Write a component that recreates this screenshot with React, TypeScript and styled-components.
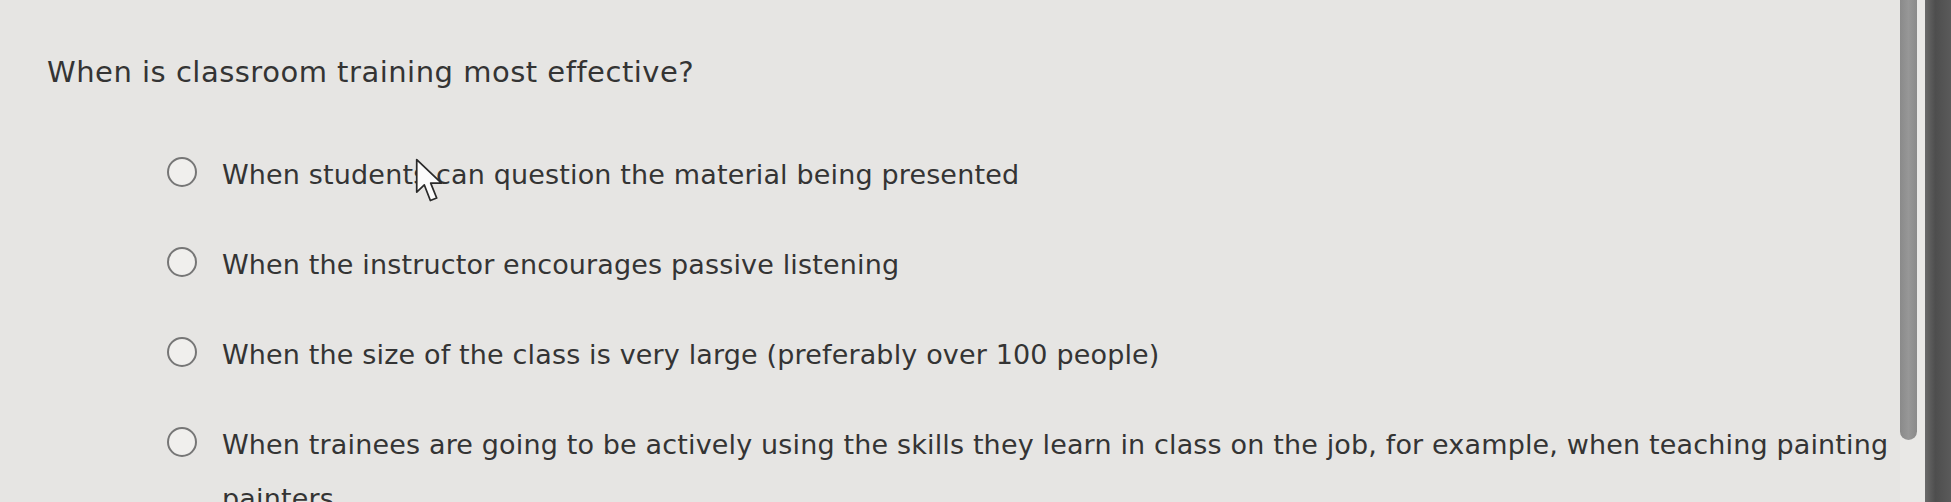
import React, { useState } from 'react';
import styled, { createGlobalStyle } from 'styled-components';

const options = [
  'When students can question the material being presented',
  'When the instructor encourages passive listening',
  'When the size of the class is very large (preferably over 100 people)',
  'When trainees are going to be actively using the skills they learn in class on the job, for example, when teaching painting painters',
];

const GlobalStyle = createGlobalStyle`
  html, body {
    margin: 0;
    padding: 0;
    background: #e5e4e2;
    overflow: hidden;
  }
`;

const Quiz = () => {
  const [selected, setSelected] = useState<number | null>(null);

  return (
    <>
      <GlobalStyle />
      <Screen>
        <Content>
          <Question>When is classroom training most effective?</Question>
          <OptionList>
            {options.map((text, i) => (
              <Option key={i} onClick={() => setSelected(i)}>
                <Radio checked={selected === i} />
                <Label>{text}</Label>
              </Option>
            ))}
          </OptionList>
          <Cursor viewBox="0 0 20 29" aria-hidden>
            <path
              d="M1 1 L1 21.5 L5.8 17 L9.6 26.8 L13.6 25.2 L9.8 15.8 L16.6 15.8 Z"
              fill="#fbfbfb"
              stroke="#2a2a2a"
              strokeWidth="1.1"
              strokeLinejoin="round"
            />
          </Cursor>
        </Content>
        <Gutter>
          <Thumb />
        </Gutter>
        <Bezel />
      </Screen>
    </>
  );
};

const Screen = styled.div`
  display: flex;
  width: 1951px;
  height: 502px;
  overflow: hidden;
  font-family: 'DejaVu Sans', Verdana, sans-serif;
  color: #343434;
`;

const Content = styled.main`
  position: relative;
  flex: 1;
  min-width: 0;
  padding: 54px 0 0 47px;
  background: #e6e5e3;
`;

const Question = styled.h1`
  margin: 0;
  font-size: 29px;
  font-weight: normal;
  line-height: 36px;
  letter-spacing: 0.5px;
`;

const OptionList = styled.ul`
  list-style: none;
  margin: 58px 0 0;
  padding: 0 0 0 120px;
  display: flex;
  flex-direction: column;
  gap: 36px;
`;

const Option = styled.li`
  display: flex;
  align-items: flex-start;
  gap: 25px;
  cursor: pointer;
`;

const Radio = styled.span<{ checked: boolean }>`
  flex: none;
  box-sizing: border-box;
  width: 30px;
  height: 30px;
  margin-top: 9px;
  border-radius: 50%;
  border: 2.5px solid #767676;
  background: ${(p) => (p.checked ? 'radial-gradient(circle, #555 0 6px, #f0efed 7px)' : '#f0efed')};
`;

const Label = styled.span`
  font-size: 27px;
  line-height: 54px;
  letter-spacing: 0.15px;
  max-width: 1680px;
`;

const Cursor = styled.svg`
  position: absolute;
  left: 415px;
  top: 158px;
  width: 32px;
  height: 46px;
`;

const Gutter = styled.div`
  flex: none;
  width: 25px;
  background: #e9e8e6;
`;

const Thumb = styled.div`
  width: 17px;
  height: 440px;
  border-radius: 0 0 9px 9px;
  background: linear-gradient(90deg, #8a8a8a, #979797 50%, #8a8a8a);
`;

const Bezel = styled.div`
  flex: none;
  width: 26px;
  background: linear-gradient(90deg, #6a6a6a, #4e4e4e 40%, #5a5a5a);
`;

export default Quiz;
